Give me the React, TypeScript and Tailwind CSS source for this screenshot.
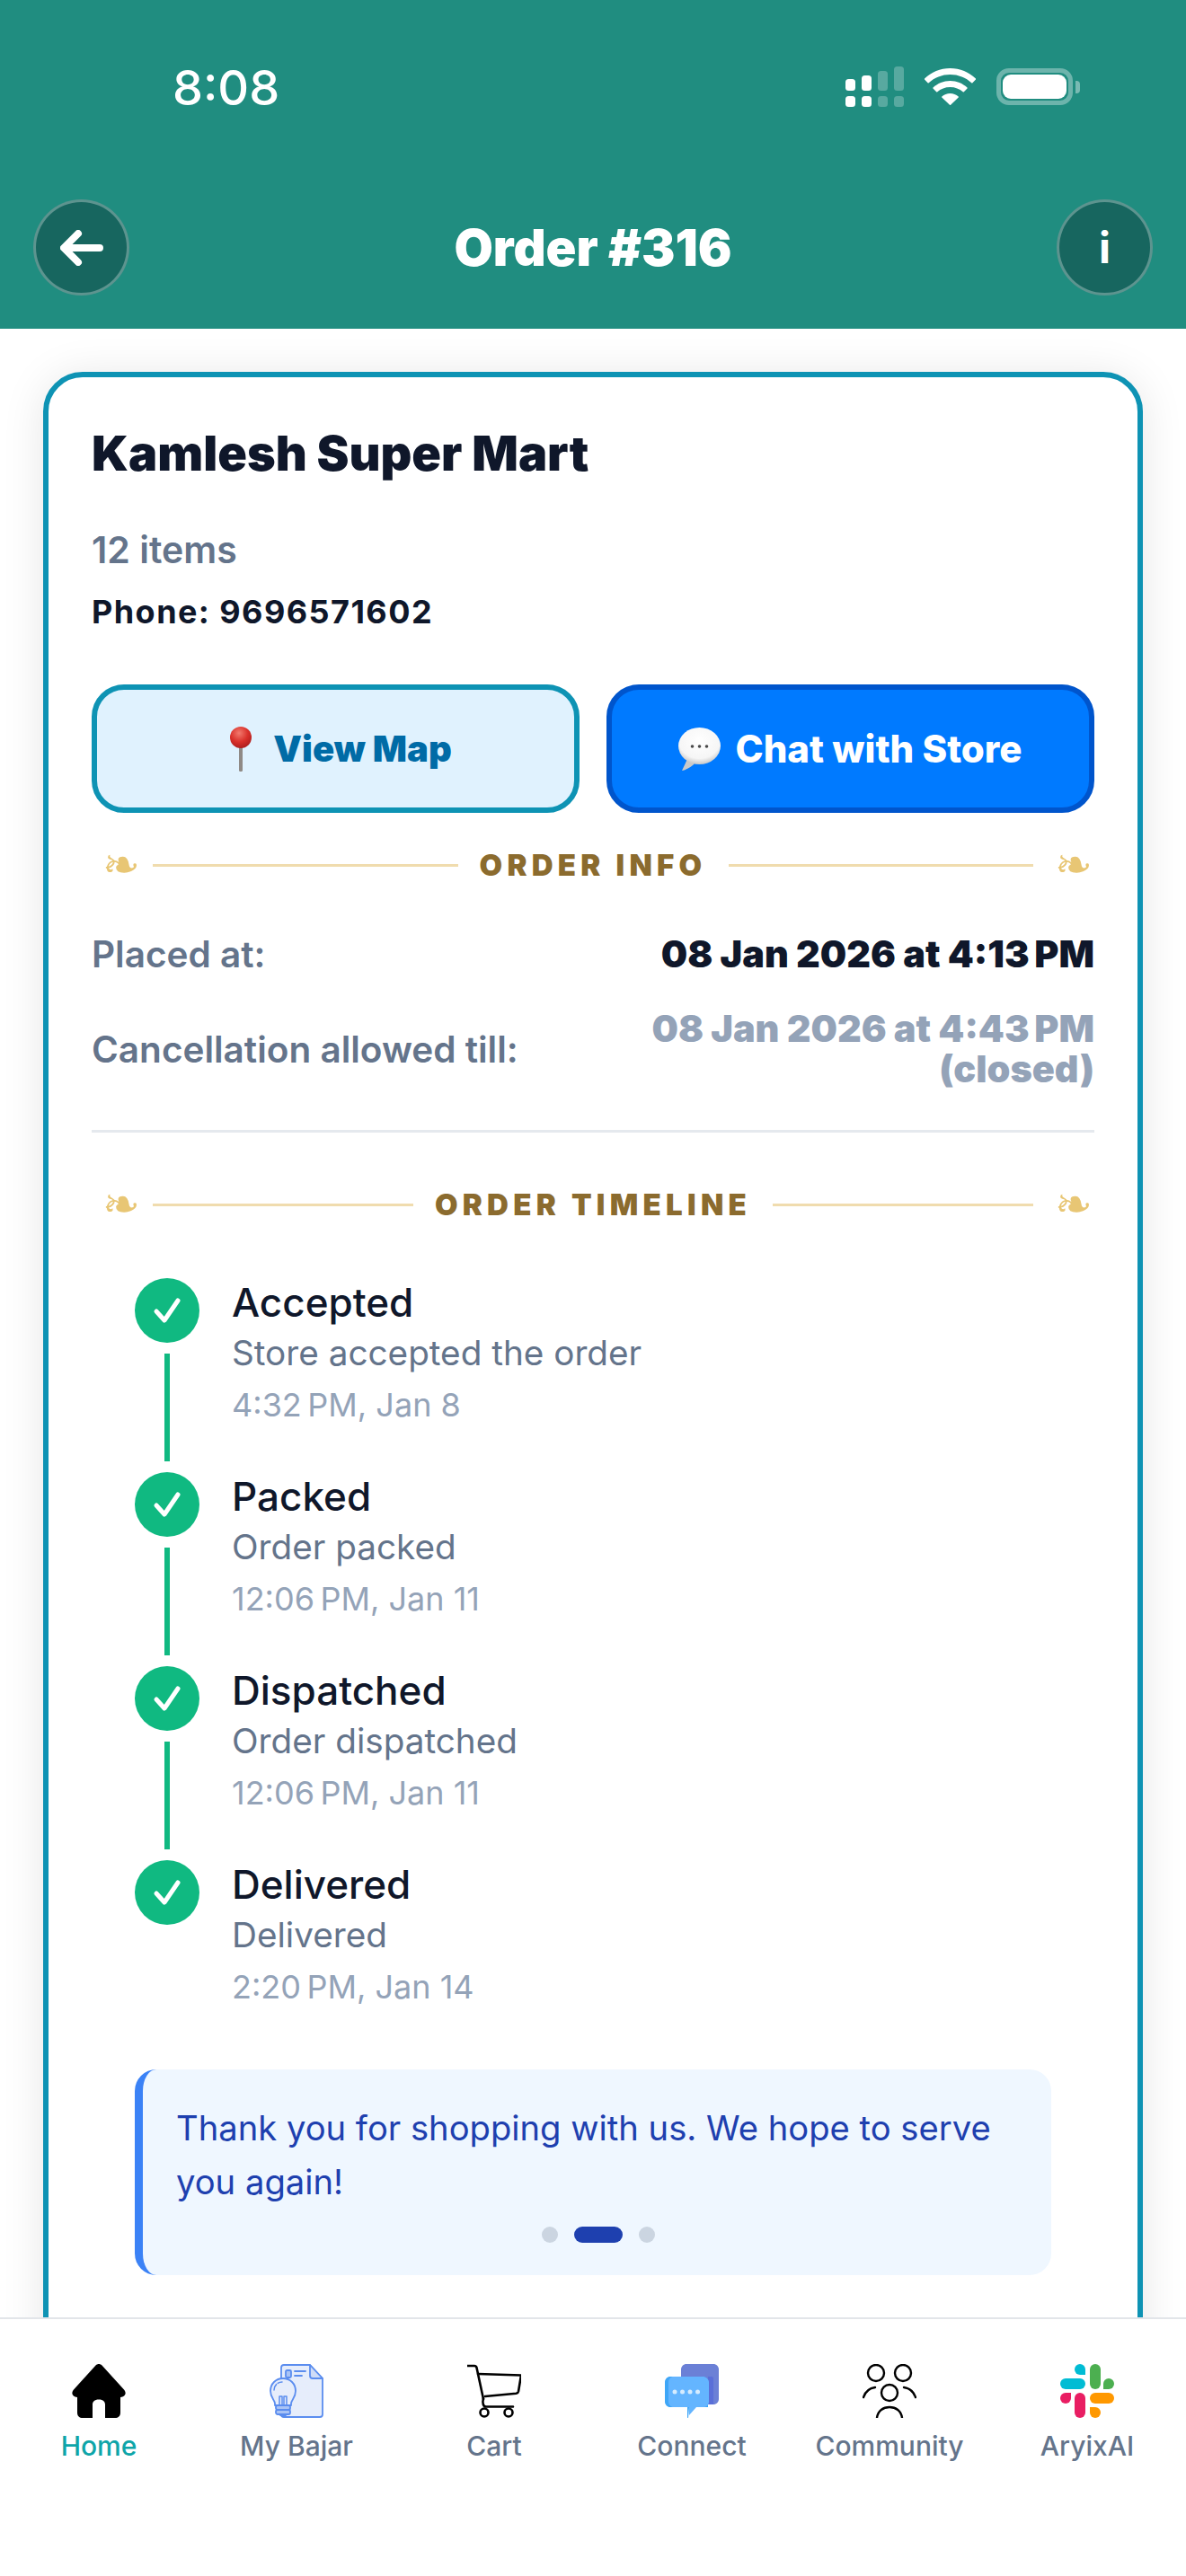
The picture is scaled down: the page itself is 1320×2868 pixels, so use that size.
import type { ReactNode } from "react";

const steps = [
  { title: "Accepted", note: "Store accepted the order", time: "4:32\u202fPM, Jan 8" },
  { title: "Packed", note: "Order packed", time: "12:06\u202fPM, Jan 11" },
  { title: "Dispatched", note: "Order dispatched", time: "12:06\u202fPM, Jan 11" },
  { title: "Delivered", note: "Delivered", time: "2:20\u202fPM, Jan 14" },
];

const StatusIcons = () => (
  <div className="flex items-center">
    {/* signal */}
    <svg width="65" height="45" viewBox="0 0 65 45">
      <g fill="#fff">
        <rect x="0" y="14" width="11" height="13" rx="3.5" />
        <rect x="18" y="10" width="11" height="17" rx="3.5" />
        <rect x="0" y="33" width="11" height="12" rx="3.5" />
        <rect x="18" y="33" width="11" height="12" rx="3.5" />
      </g>
      <g fill="#fff" fillOpacity="0.25">
        <rect x="36" y="5" width="11" height="22" rx="3.5" />
        <rect x="54" y="0" width="11" height="27" rx="3.5" />
        <rect x="36" y="33" width="11" height="12" rx="3.5" />
        <rect x="54" y="33" width="11" height="12" rx="3.5" />
      </g>
    </svg>
    {/* wifi */}
    <svg className="ml-[23px]" width="57" height="41" viewBox="0 0 57 41">
      <path
        fill="#fff"
        d="M28.5 0C39.5 0 49.5 4.4 57 11.5c.3.3.3.8 0 1.1l-3.6 3.7c-.3.3-.8.3-1.1 0C46 10.400 37.600 7 28.500 7S11 10.400 4.700 16.300c-.3.3-.8.3-1.100 0L0 12.600c-.3-.3-.3-.8 0-1.100C7.500 4.400 17.500 0 28.500 0Z"
      />
      <path
        fill="#fff"
        d="M28.500 14c7.300 0 14 2.900 19 7.500.3.3.3.8 0 1.100l-3.700 3.700c-.3.3-.8.3-1.100 0-3.700-3.400-8.700-5.400-14.200-5.400s-10.500 2-14.200 5.400c-.3.3-.8.3-1.100 0l-3.700-3.700c-.3-.3-.3-.8 0-1.100 5-4.600 11.700-7.500 19-7.500Z"
      />
      <path
        fill="#fff"
        d="M28.500 28c3.500 0 6.700 1.300 9.200 3.400.3.300.3.800 0 1.100l-8.600 8.200c-.3.300-.8.300-1.100 0l-8.700-8.200c-.3-.3-.3-.8 0-1.100 2.500-2.100 5.700-3.400 9.200-3.400Z"
      />
    </svg>
    {/* battery */}
    <div className="ml-[23px] flex items-center">
      <div className="h-[41px] w-[85px] rounded-[14px] border-[5px] border-white/35 p-[2px]">
        <div className="h-full w-full rounded-[9px] bg-white" />
      </div>
      <div className="ml-[3px] h-[14px] w-[5px] rounded-r-[4px] bg-white/40" />
    </div>
  </div>
);

const RoundButton = ({ children }: { children: ReactNode }) => (
  <div className="flex size-[107px] items-center justify-center rounded-full border-[3px] border-white/30 bg-[#17665f] text-white">
    {children}
  </div>
);

const Header = () => (
  <header className="h-[366px] shrink-0 bg-[#208d80]">
    <div className="flex h-[222px] items-start justify-between pl-[192px] pr-[118px] pt-[68px]">
      <span className="text-[54px] font-medium leading-[60px] text-white">8:08</span>
      <div className="pt-[6px]">
        <StatusIcons />
      </div>
    </div>
    <div className="flex items-center justify-between px-[37px]">
      <RoundButton>
        <svg width="48" height="40" viewBox="0 0 48 40" fill="none" stroke="#fff" strokeWidth="8" strokeLinecap="round" strokeLinejoin="round">
          <path d="M44 20H6M20 4 4 20l16 16" />
        </svg>
      </RoundButton>
      <h1 className="text-[56px] font-black leading-[64px] text-white">Order #316</h1>
      <RoundButton>
        <span className="text-[48px] font-bold leading-none">i</span>
      </RoundButton>
    </div>
  </header>
);

const Flourish = () => (
  <span className="w-[32px] shrink-0 text-center text-[50px] leading-[36px] text-[#e8c674] [font-family:'DejaVu_Sans',sans-serif]">❧</span>
);

const SectionTitle = ({ children }: { children: ReactNode }) => (
  <div className="flex h-[36px] items-center gap-[24px] px-[12px]">
    <Flourish />
    <div className="h-[3px] flex-1 bg-[#f0dcae]" />
    <span className="text-[33px] font-black leading-[36px] tracking-[0.16em] text-[#8b6b2e]">{children}</span>
    <div className="h-[3px] flex-1 bg-[#f0dcae]" />
    <Flourish />
  </div>
);

const PinEmoji = () => (
  <svg width="24" height="50" viewBox="0 0 24 50">
    <defs>
      <radialGradient id="pinBall" cx="0.42" cy="0.3" r="0.75">
        <stop offset="0" stopColor="#f27a6e" />
        <stop offset="0.55" stopColor="#d9302a" />
        <stop offset="1" stopColor="#a81c1c" />
      </radialGradient>
    </defs>
    <rect x="10" y="20" width="4" height="30" rx="1.500" fill="#8f8a86" />
    <circle cx="12" cy="12" r="12" fill="url(#pinBall)" />
  </svg>
);

const BalloonEmoji = () => (
  <svg width="47" height="48" viewBox="0 0 47 48">
    <defs>
      <radialGradient id="balloonFill" cx="0.5" cy="0.35" r="0.7">
        <stop offset="0" stopColor="#ffffff" />
        <stop offset="0.7" stopColor="#f6f6f6" />
        <stop offset="1" stopColor="#b9b9b9" />
      </radialGradient>
    </defs>
    <path d="M10 35 4 48c5-1 11-4 15-9Z" fill="#c9c9c9" />
    <ellipse cx="23.500" cy="20.500" rx="23.500" ry="20.500" fill="url(#balloonFill)" />
    <g fill="#4a4a4a">
      <circle cx="15.500" cy="21" r="1.800" />
      <circle cx="23.500" cy="21" r="1.800" />
      <circle cx="31.500" cy="21" r="1.800" />
    </g>
  </svg>
);

const TimelineStep = ({ step, last }: { step: (typeof steps)[number]; last: boolean }) => (
  <div className="flex h-[216px]">
    <div className="flex w-[72px] shrink-0 flex-col items-center">
      <div className="flex size-[72px] items-center justify-center rounded-full bg-[#10b981]">
        <svg width="32" height="30" viewBox="0 0 32 30" fill="none" stroke="#fff" strokeWidth="5" strokeLinecap="round" strokeLinejoin="round">
          <path d="M4 16l9 10L28 4" />
        </svg>
      </div>
      {!last && <div className="mt-[12px] h-[120px] w-[6px] bg-[#10b981]" />}
    </div>
    <div className="ml-[36px]">
      <div className="text-[44px] font-[550] leading-[54px] text-[#0f172a]">{step.title}</div>
      <div className="mt-[2px] text-[38.7px] leading-[54px] text-[#64748b]">{step.note}</div>
      <div className="mt-[4px] text-[36px] leading-[54px] text-[#94a3b8]">{step.time}</div>
    </div>
  </div>
);

const HomeIcon = () => (
  <svg width="60" height="60" viewBox="0 0 60 60">
    <path
      fill="#000"
      d="M26.500 1.500c2-2 5-2 7 0l24.500 27c3.500 4 1 8.500-4 8.500H54v17c0 4-2.500 6-6 6H37V45c0-3-2-5.500-7-5.500S23 42 23 45v15H12c-3.500 0-6-2-6-6V37H6C1 37-1.500 32.500 2 28.500Z"
    />
  </svg>
);

const DocBulbIcon = () => (
  <svg width="60" height="60" viewBox="0 0 60 60" fill="none" stroke="#5b8def" strokeWidth="1.800" strokeLinejoin="round" strokeLinecap="round">
    <path fill="#e6edfb" d="M16 1h29l14 15v40c0 2-1 3-3 3H16c-2 0-3-1-3-3V4c0-2 1-3 3-3Z" />
    <path fill="#cfdcf7" d="M45 1v12c0 2 1 3 3 3h11Z" />
    <rect x="18" y="7" width="6" height="8" rx="1.500" fill="#a9c3f5" />
    <path d="M28 8h12M28 13h8" />
    <path fill="#e6edfb" d="M6 44c0-4-5-6-5-14 0-8 6-14 14-14s14 6 14 14c0 8-5 10-5 14v2H6Z" />
    <path d="M5 29c0-5 4-9 9-9" strokeWidth="1.500" strokeDasharray="7 2" />
    <path d="M11 46V36h3v10M16 46V36h3v10" strokeWidth="1.500" />
    <rect x="7" y="46" width="16" height="5" rx="2" fill="#a9c3f5" />
    <rect x="7" y="51" width="16" height="5" rx="2" fill="#a9c3f5" />
    <path d="M11 56c1 2 7 2 8 0" />
  </svg>
);

const CartIcon = () => (
  <svg width="60" height="60" viewBox="0 0 60 60" fill="none" stroke="#000" strokeWidth="2.600" strokeLinecap="round" strokeLinejoin="round">
    <path d="M0 2h8c1 0 2 .5 2.500 2l7.500 35" />
    <path d="M12 11l48 1.500-3 18c-.3 1.500-1 2-2.500 2.300L20 36" />
    <path d="M18 38c-1.500 6 0 9.500 3 9.500h30" />
    <circle cx="19" cy="54" r="4.500" />
    <circle cx="46" cy="54" r="4.500" />
  </svg>
);

const ChatIcon = () => (
  <svg width="60" height="60" viewBox="0 0 60 60">
    <path fill="#6b80d6" d="M18 6c0-3.300 2.700-6 6-6h30c3.300 0 6 2.700 6 6v33c0 3.300-2.700 6-6 6H24c-3.300 0-6-2.700-6-6Z" />
    <path fill="#5a6fd8" d="M48 14h4c1.500 0 2 1 2 2v29h-6Z" />
    <path fill="#3ea6f7" d="M6 14h36c3.300 0 6 2.700 6 6v28H27L26 60c-.5 0-1 0-1-1v-11H6c-3.300 0-6-2.700-6-6V20c0-3.300 2.700-6 6-6Z" />
    <path fill="#64b5ff" d="M10 14h32c3.300 0 7 2.700 7 6v22c0 3.300-2.700 6-6 6H35L27 57v-9H10c-3.300 0-6-2.700-6-6V20c0-3.300 2.700-6 6-6Z" />
    <g fill="#d6ecff">
      <circle cx="11" cy="31" r="2.500" />
      <circle cx="19.500" cy="31" r="2.500" />
      <circle cx="28" cy="31" r="2.500" />
      <circle cx="36.500" cy="31" r="2.500" />
    </g>
  </svg>
);

const CommunityIcon = () => (
  <svg width="60" height="60" viewBox="0 0 60 60" fill="none" stroke="#000" strokeWidth="2.400" strokeLinecap="round">
    <circle cx="15" cy="10" r="9" />
    <circle cx="45" cy="10" r="9" />
    <circle cx="30" cy="32" r="9" />
    <path d="M1 37c2-6 6-10 13-11M59 37c-2-6-6-10-13-11M16 60c1-8 7-12 14-12s13 4 14 12" />
  </svg>
);

const SlackIcon = () => (
  <svg width="60" height="60" viewBox="0 0 60 60">
    <rect x="0" y="16" width="28" height="12" rx="6" fill="#00bcd4" />
    <path fill="#00bcd4" d="M22 0a6 6 0 0 1 6 6v6h-6a6 6 0 0 1 0-12Z" />
    <rect x="33" y="0" width="12" height="28" rx="6" fill="#4caf50" />
    <path fill="#4caf50" d="M60 22a6 6 0 0 1-6 6h-6v-6a6 6 0 0 1 12 0Z" />
    <rect x="16" y="32" width="12" height="28" rx="6" fill="#e91e63" />
    <path fill="#e91e63" d="M0 38a6 6 0 0 1 6-6h6v6a6 6 0 0 1-12 0Z" />
    <rect x="33" y="32" width="27" height="12" rx="6" fill="#ff9800" />
    <path fill="#ff9800" d="M39 60a6 6 0 0 1-6-6v-6h6a6 6 0 0 1 0 12Z" />
  </svg>
);

const tabs = [
  { label: "Home", icon: <HomeIcon />, active: true },
  { label: "My Bajar", icon: <DocBulbIcon />, active: false },
  { label: "Cart", icon: <CartIcon />, active: false },
  { label: "Connect", icon: <ChatIcon />, active: false },
  { label: "Community", icon: <CommunityIcon />, active: false },
  { label: "AryixAI", icon: <SlackIcon />, active: false },
];

const BottomNav = () => (
  <nav className="grid h-[288px] shrink-0 grid-cols-6 border-t-2 border-[#e2e5e9] bg-white pt-[50px]">
    {tabs.map((tab) => (
      <div key={tab.label} className="flex flex-col items-center">
        {tab.icon}
        <span className={`mt-[12px] text-[30px] font-medium leading-[38px] ${tab.active ? "text-[#0ea5a9]" : "text-[#64748b]"}`}>
          {tab.label}
        </span>
      </div>
    ))}
  </nav>
);

export default function App() {
  return (
    <div className="flex h-[2868px] w-[1320px] flex-col overflow-hidden bg-white font-['Inter',sans-serif]">
      <Header />
      <main className="min-h-0 flex-1 overflow-hidden px-[48px] pt-[48px]">
        <section className="h-[2300px] rounded-[44px] border-[6px] border-[#0e93b4] bg-white px-[48px] pt-[54px] shadow-[0_4px_48px_rgba(0,0,0,0.1)]">
          <h2 className="text-[54px] font-black leading-[62px] text-[#0f172a]">Kamlesh Super Mart</h2>
          <p className="mt-[53px] text-[41px] font-semibold leading-[46px] text-[#64748b]">12 items</p>
          <p className="mt-[24px] text-[36px] font-bold leading-[44px] tracking-[0.04em] text-[#0f172a]">Phone: 9696571602</p>

          <div className="mt-[59px] grid grid-cols-2 gap-[30px]">
            <button className="flex h-[143px] items-center justify-center gap-[24px] rounded-[36px] border-[6px] border-[#0e93b4] bg-[#e0f2fe] pl-[12px] text-[40px] font-black text-[#006ba6]">
              <PinEmoji />
              View Map
            </button>
            <button className="flex h-[143px] items-center justify-center gap-[16px] rounded-[36px] border-[6px] border-[#0055cc] bg-[#007aff] text-[42px] font-extrabold text-white">
              <BalloonEmoji />
              Chat with Store
            </button>
          </div>

          <div className="mt-[40px]">
            <SectionTitle>ORDER INFO</SectionTitle>
          </div>

          <div className="mt-[59px] flex items-center justify-between leading-[45px]">
            <span className="text-[40.5px] font-semibold text-[#64748b]">Placed at:</span>
            <span className="text-[41.4px] font-black text-[#0f172a]">08 Jan 2026 at 4:13{"\u202f"}PM</span>
          </div>
          <div className="mt-[38px] flex items-center justify-between leading-[45px]">
            <span className="text-[40.5px] font-semibold text-[#64748b]">Cancellation allowed till:</span>
            <span className="w-[520px] text-right text-[41.4px] font-black text-[#94a3b8]">08 Jan 2026 at 4:43{"\u202f"}PM (closed)</span>
          </div>

          <div className="mt-[45px] h-[3px] bg-[#e5e9ee]" />

          <div className="mt-[62px]">
            <SectionTitle>ORDER TIMELINE</SectionTitle>
          </div>

          <div className="mt-[64px] px-[48px]">
            {steps.map((step, i) => (
              <TimelineStep key={step.title} step={step} last={i === steps.length - 1} />
            ))}
          </div>

          <div className="mx-[48px] mt-[17px] h-[229px] rounded-[24px] border-l-[9px] border-[#3b82f6] bg-[#eff7ff] pl-[37px] pr-[30px] pt-[35px]">
            <p className="text-[38.2px] leading-[60px] text-[#1e40af]">Thank you for shopping with us. We hope to serve you again!</p>
            <div className="mt-[20px] flex items-center justify-center gap-[18px] pr-[4px]">
              <span className="size-[18px] rounded-full bg-[#cbd5e1]" />
              <span className="h-[18px] w-[54px] rounded-full bg-[#1e40af]" />
              <span className="size-[18px] rounded-full bg-[#cbd5e1]" />
            </div>
          </div>
        </section>
      </main>
      <BottomNav />
    </div>
  );
}
